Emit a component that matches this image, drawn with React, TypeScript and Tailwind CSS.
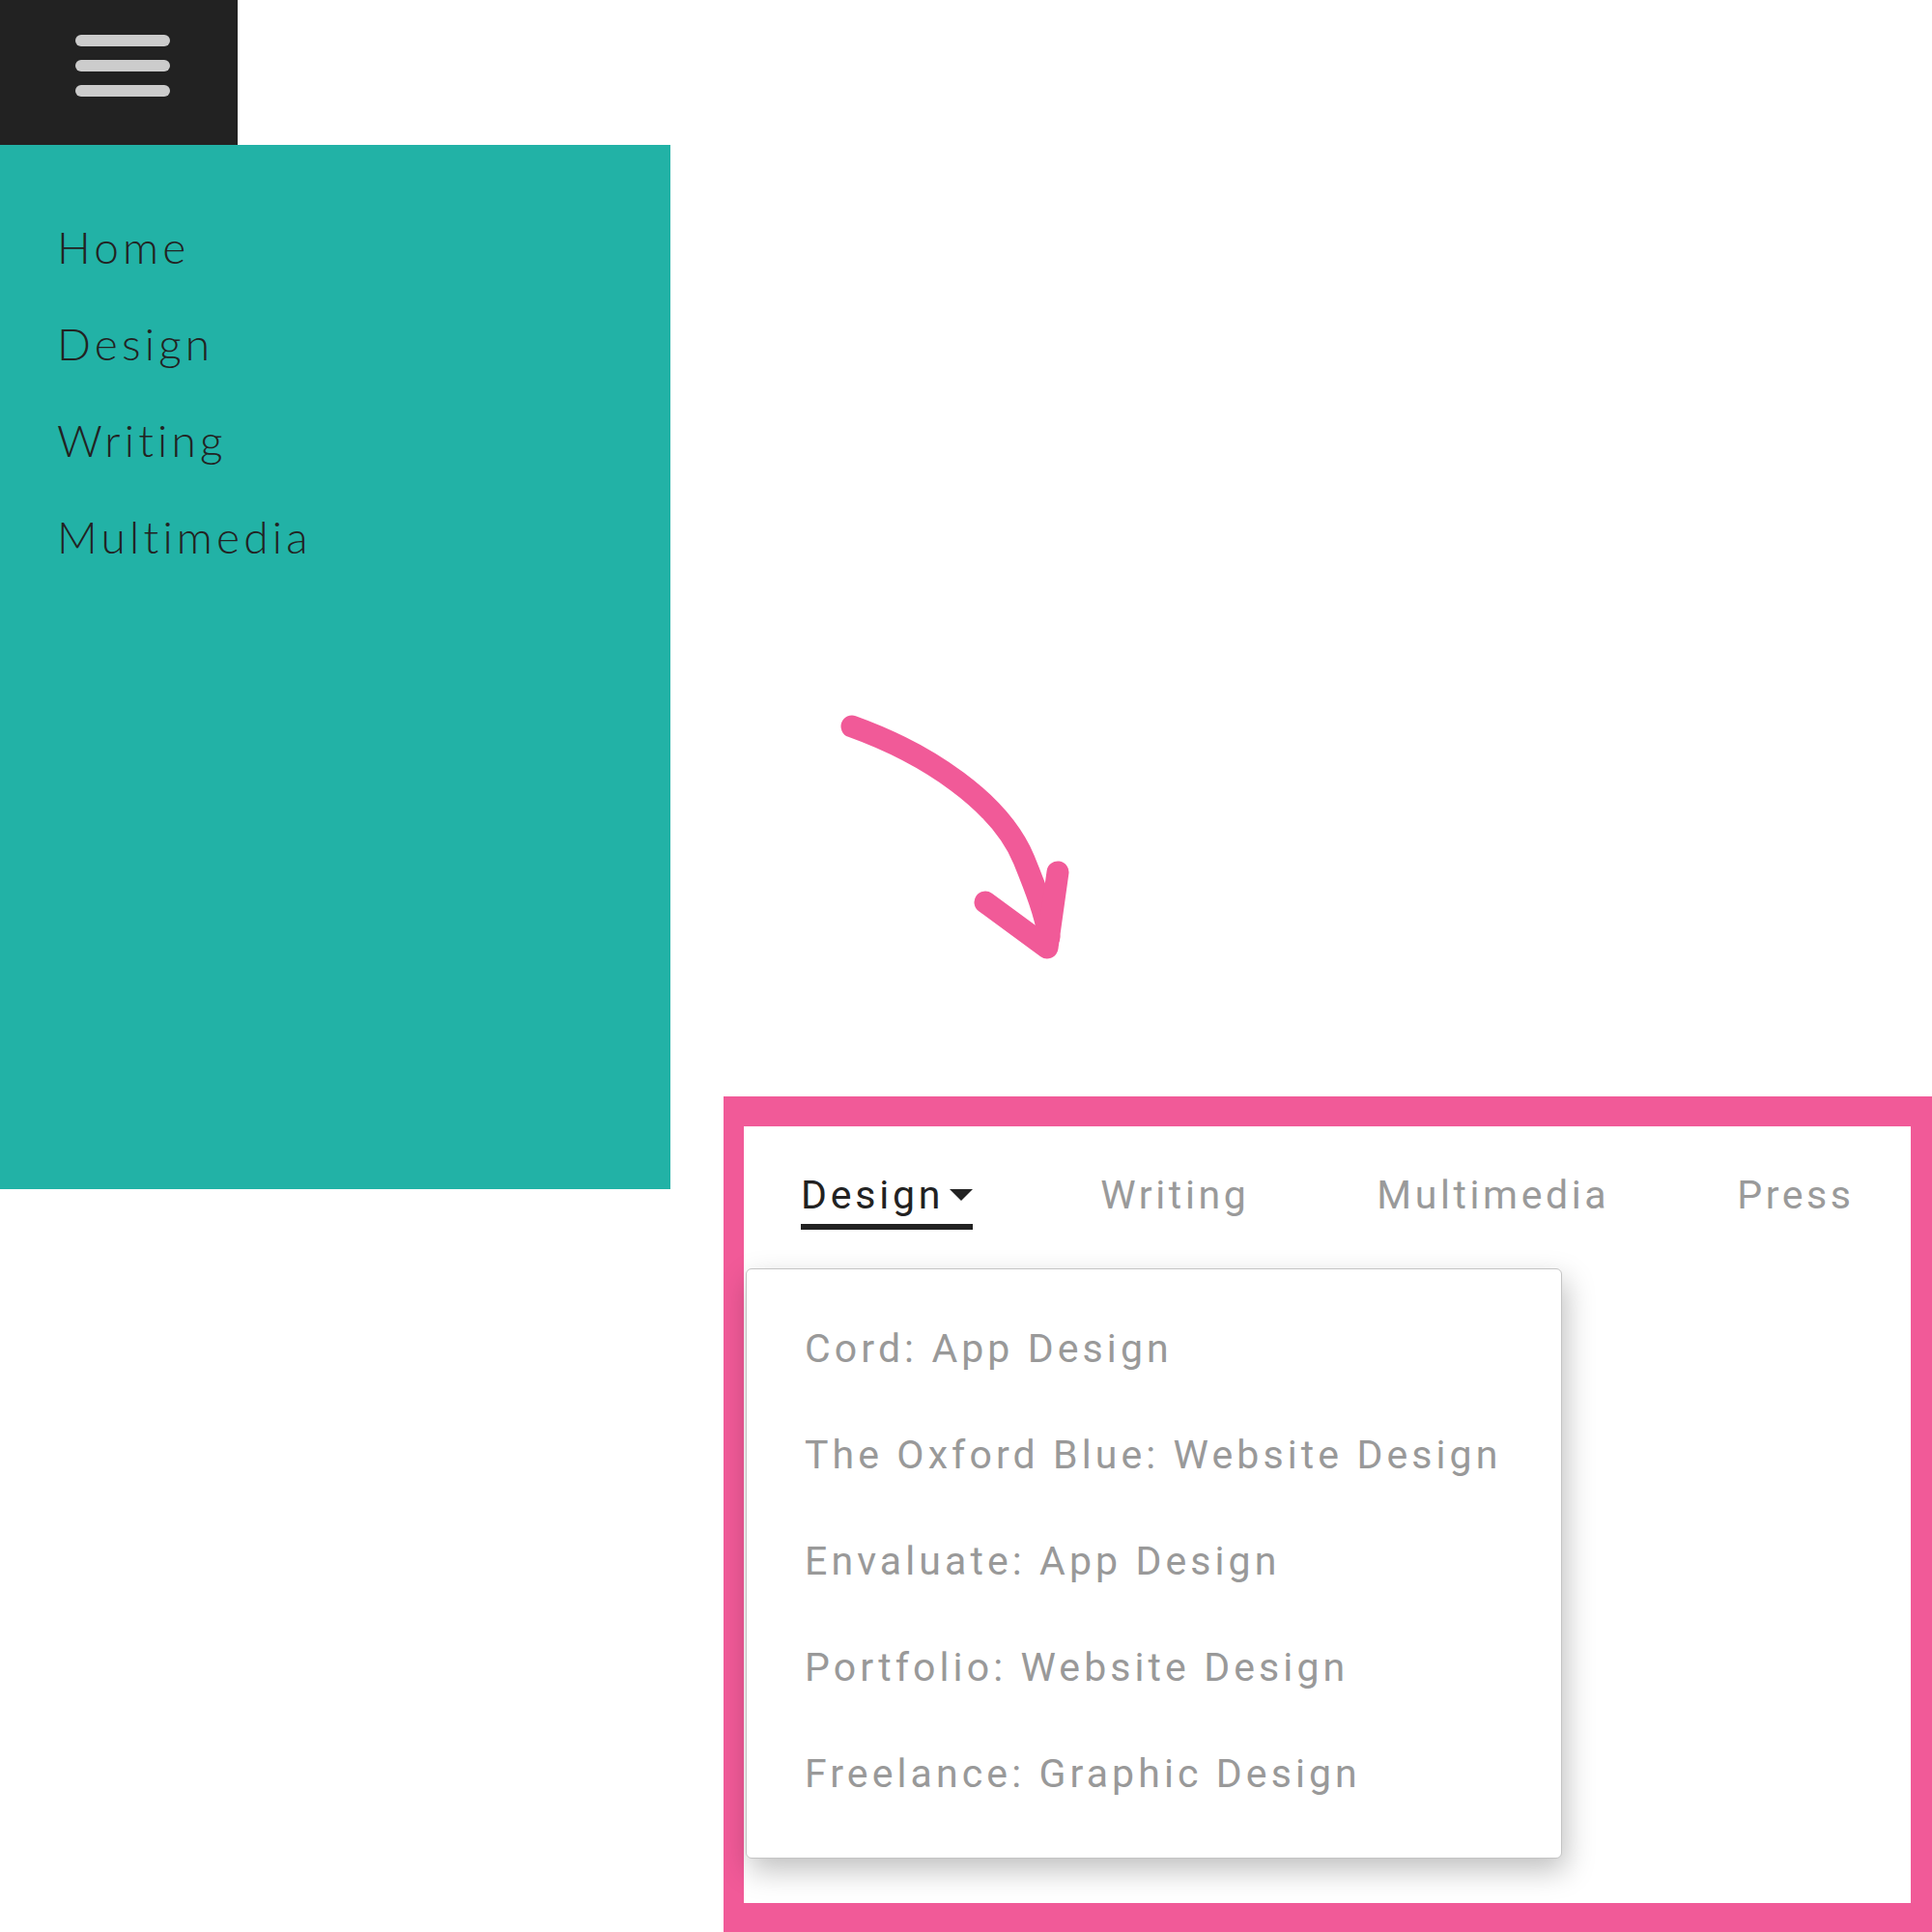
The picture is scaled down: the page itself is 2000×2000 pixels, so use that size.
import React from 'react';

const sideLinks = ['Home', 'Design', 'Writing', 'Multimedia'];
const tabs = ['Writing', 'Multimedia', 'Press'];
const projects = [
  'Cord: App Design',
  'The Oxford Blue: Website Design',
  'Envaluate: App Design',
  'Portfolio: Website Design',
  'Freelance: Graphic Design',
];

function Arrow() {
  return (
    <svg width="240" height="255" viewBox="0 0 240 255" fill="none">
      <path
        d="M12 12 C90 40 165 90 190 150 C203 182 212 206 216 230"
        stroke="#f15a98"
        strokeWidth="23"
        strokeLinecap="round"
      />
      <path
        d="M150 194 L214 241 L225 163"
        stroke="#f15a98"
        strokeWidth="23"
        strokeLinecap="round"
        strokeLinejoin="round"
      />
    </svg>
  );
}

export default function App() {
  return (
    <div className="w-[2000px] h-[2000px] bg-white flex overflow-hidden">
      {/* mobile menu */}
      <div className="w-[694px] flex flex-col">
        <div className="w-[246px] h-[150px] bg-[#222222] pl-[78px] pt-[36px] flex flex-col gap-[14px]">
          <span className="block w-[98px] h-[12px] rounded-full bg-[#cccccc]" />
          <span className="block w-[98px] h-[12px] rounded-full bg-[#cccccc]" />
          <span className="block w-[98px] h-[12px] rounded-full bg-[#cccccc]" />
        </div>
        <nav className="h-[1081px] bg-[#22b2a6] pt-[56px] pl-[59px] flex flex-col font-['Lato',sans-serif]">
          {sideLinks.map((l) => (
            <a key={l} className="text-[46px] font-light leading-[100px] tracking-[4.2px] text-[#222222]">
              {l}
            </a>
          ))}
        </nav>
      </div>

      {/* desktop menu */}
      <div className="flex-1 flex flex-col pl-[55px]">
        <div className="mt-[740px] ml-[121px]">
          <Arrow />
        </div>
        <div className="mt-[140px] w-[1251px] h-[865px] bg-[#f15a98] pt-[31px] pl-[21px] pr-[22px] pb-[30px]">
          <div className="h-full bg-white flex flex-col font-['Roboto',sans-serif]">
            <div className="flex items-start gap-[132px] pl-[59px] pt-[41px]">
              <div className="flex items-center border-b-[6px] border-[#222222] text-[41px] leading-[60px] tracking-[3.8px] text-[#222222]">
                Design
                <svg width="24" height="12" viewBox="0 0 24 12" className="ml-[6px]">
                  <polygon points="0,0 24,0 12,12" fill="#222222" />
                </svg>
              </div>
              {tabs.map((t) => (
                <div key={t} className="text-[41px] leading-[60px] tracking-[3.6px] text-[#9a9a9a]">
                  {t}
                </div>
              ))}
            </div>
            <ul className="mt-[40px] ml-[2px] w-[845px] h-[611px] bg-white border border-[#c4c4c4] rounded-[6px] shadow-[4px_12px_30px_rgba(0,0,0,0.25)] pt-[27px] pl-[60px]">
              {projects.map((p) => (
                <li key={p} className="text-[41px] leading-[110px] tracking-[4.1px] text-[#999999]">
                  {p}
                </li>
              ))}
            </ul>
          </div>
        </div>
      </div>
    </div>
  );
}
